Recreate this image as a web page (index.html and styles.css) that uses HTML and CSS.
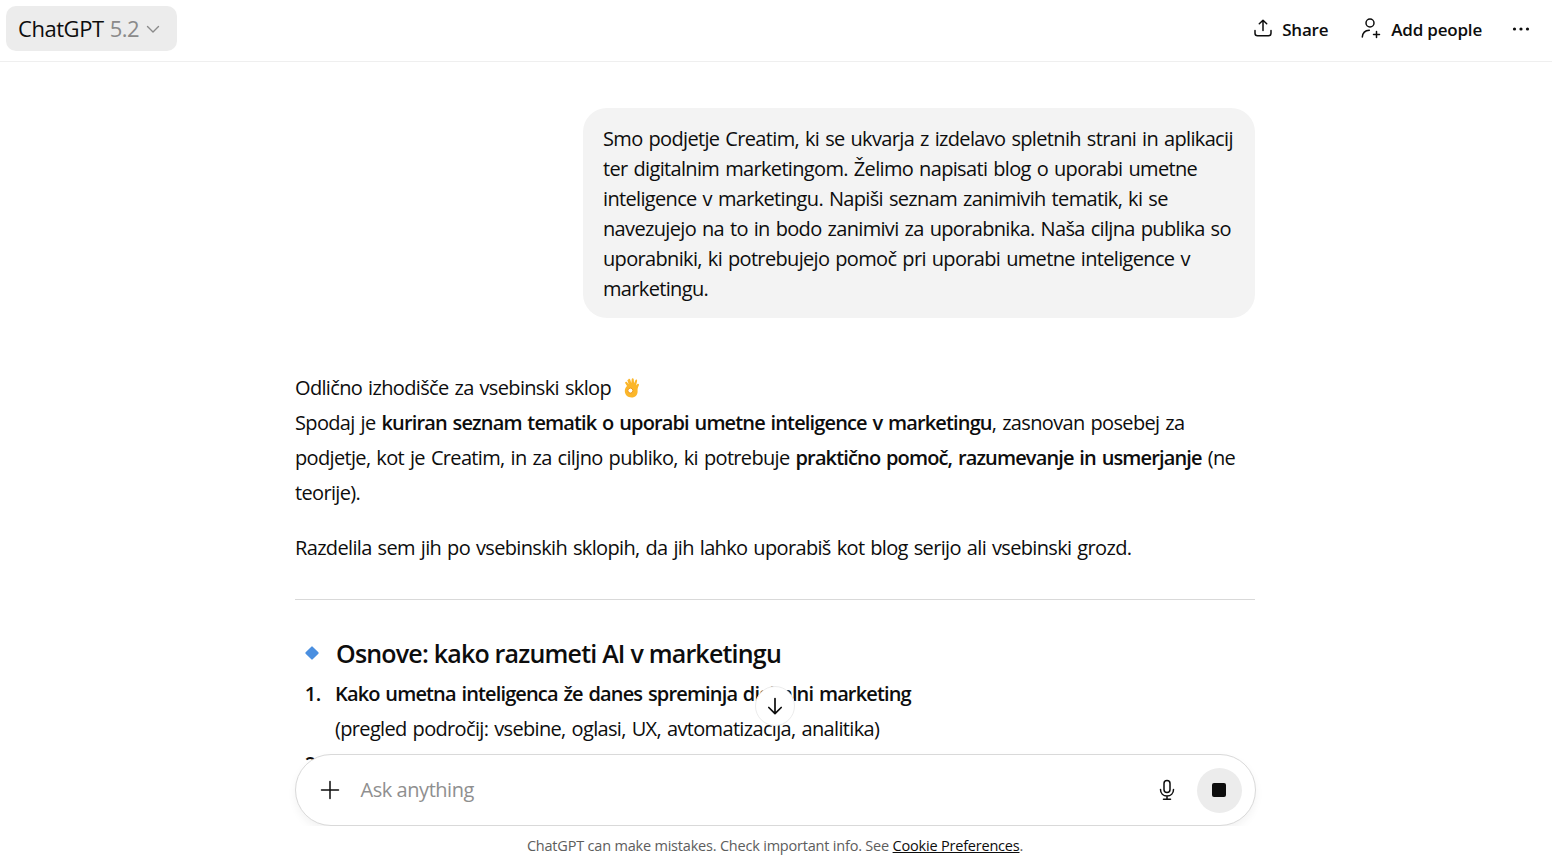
FILE: index.html
```html
<!DOCTYPE html>
<html lang="sl">
<head>
    <meta charset="UTF-8">
    <meta name="viewport" content="width=device-width, initial-scale=1.0">
    <title>ChatGPT</title>
    <link rel="stylesheet" href="styles.css">
</head>
<body>

<div class="page">
    <header class="topbar">
        <button class="model-btn">ChatGPT <span class="model-ver">5.2</span>
            <svg class="chev" width="16" height="16" viewBox="0 0 16 16"><path d="M2.500 5.500 8 11l5.500-5.500" fill="none" stroke="#8a8a8a" stroke-width="1.400" stroke-linecap="round" stroke-linejoin="round"/></svg>
        </button>
        <div class="top-actions">
            <button class="top-btn">
                <svg width="20" height="20" viewBox="0 0 20 20" fill="none" stroke="#0d0d0d" stroke-width="1.500" stroke-linecap="round" stroke-linejoin="round"><path d="M10 12.500V2.300M6.300 5.800 10 2.200l3.700 3.600M2 12.500v2.800c0 1.500 1 2.500 2.500 2.500h11c1.500 0 2.500-1 2.500-2.500v-2.800"/></svg>
                Share
            </button>
            <button class="top-btn">
                <svg width="22" height="22" viewBox="0 0 22 22" fill="none" stroke="#0d0d0d" stroke-width="1.500" stroke-linecap="round" stroke-linejoin="round"><circle cx="10" cy="6" r="4"/><path d="M2.300 20c.3-4 3-6.600 7-6.800M16.500 14.500v6M13.500 17.500h6"/></svg>
                Add people
            </button>
            <button class="more-btn" aria-label="More">
                <svg width="20" height="20" viewBox="0 0 20 20" fill="#0d0d0d"><circle cx="3.500" cy="10" r="1.600"/><circle cx="10" cy="10" r="1.600"/><circle cx="16.500" cy="10" r="1.600"/></svg>
            </button>
        </div>
    </header>

    <main class="thread">
        <div class="column">
            <div class="user-row">
                <div class="bubble">Smo podjetje Creatim, ki se ukvarja z izdelavo spletnih strani in aplikacij ter digitalnim marketingom. Želimo napisati blog o uporabi umetne inteligence v marketingu. Napiši seznam zanimivih tematik, ki se navezujejo na to in bodo zanimivi za uporabnika. Naša ciljna publika so uporabniki, ki potrebujejo pomoč pri uporabi umetne inteligence v marketingu.</div>
            </div>

            <div class="answer">
                <p class="intro">Odlično izhodišče za vsebinski sklop
                    <svg class="emoji" width="18" height="21" viewBox="0 0 18 21"><path d="M5.200 2.200c-.3-1.300 1.500-2 2-.7l1.100 3.600.4-3.900c.1-1.200 1.800-1.200 2 0l.4 4 1.300-3c.5-1.100 2-.5 1.700.7l-1 4.500 1.300-1.300c.9-.8 2 .2 1.500 1.200-1 2-1.500 3.700-1.300 5.700.3 3.800-2.300 6.500-6 6.500-3.900 0-6.800-2.800-6.800-6.500 0-2 .8-3.800 2.200-5l-1.700-2.800c-.7-1.100.8-2.100 1.600-1.100l1.800 2.200-1.500-4.600Z" fill="#fbb62a"/><circle cx="7.400" cy="12.600" r="2.500" fill="#fff" stroke="#ef9a1a" stroke-width="1"/></svg>
                    <br>Spodaj je <strong>kuriran seznam tematik o uporabi umetne inteligence v marketingu</strong>, zasnovan posebej za podjetje, kot je Creatim, in za ciljno publiko, ki potrebuje <strong>praktično pomoč, razumevanje in usmerjanje</strong> (ne teorije).</p>
                <p class="lead">Razdelila sem jih po vsebinskih sklopih, da jih lahko uporabiš kot blog serijo ali vsebinski grozd.</p>
                <hr class="rule">
                <h3 class="section-title"><span class="diamond"></span>Osnove: kako razumeti AI v marketingu</h3>
                <ol class="topics">
                    <li><strong>Kako umetna inteligenca že danes spreminja digitalni marketing</strong><br>(pregled področij: vsebine, oglasi, UX, avtomatizacija, analitika)</li>
                    <li><strong>AI v marketingu: kaj je res in kaj je samo hype</strong><br>(najpogostejši miti in napačna pričakovanja)</li>
                </ol>
            </div>
        </div>
    </main>

    <button class="scroll-btn" aria-label="Scroll down">
        <svg width="20" height="20" viewBox="0 0 20 20" fill="none" stroke="#0d0d0d" stroke-width="1.700" stroke-linecap="round" stroke-linejoin="round"><path d="M10 2.500v15M3.800 11.500 10 17.700l6.200-6.200"/></svg>
    </button>

    <div class="bottom">
        <div class="composer">
            <svg class="plus" width="20" height="20" viewBox="0 0 20 20" fill="none" stroke="#0d0d0d" stroke-width="1.500" stroke-linecap="round"><path d="M10 1.500v17M1.500 10h17"/></svg>
            <span class="placeholder">Ask anything</span>
            <svg class="mic" width="20" height="22" viewBox="0 0 20 22" fill="none" stroke="#0d0d0d" stroke-width="1.500" stroke-linecap="round"><rect x="7" y="1.500" width="6" height="12" rx="3"/><path d="M3.500 10.500c0 4 2.800 6.500 6.500 6.500s6.500-2.500 6.500-6.500M10 17v3M6.500 20.300h7"/></svg>
            <button class="stop-btn" aria-label="Stop"><span class="stop-icon"></span></button>
        </div>
        <p class="disclaimer">ChatGPT can make mistakes. Check important info. See <a href="#">Cookie Preferences</a>.</p>
    </div>
</div>

</body>
</html>
```

FILE: styles.css
```css
* { box-sizing: border-box; }
html, body { margin: 0; height: 100%; overflow: hidden; }
body { font-family: "Open Sans", "Noto Sans", sans-serif; font-size: 20px; color: #0d0d0d; background: #fff; }
button { font: inherit; color: inherit; background: none; border: none; padding: 0; cursor: pointer; }

.page { position: relative; height: 860px; display: flex; flex-direction: column; }

.topbar { height: 62px; flex: none; display: flex; justify-content: space-between; align-items: center; padding: 0 21px 4px 6px; border-bottom: 1px solid #efefef; }
.model-btn { display: flex; align-items: center; height: 45px; padding: 0 16px 2px 12px; gap: 6px; background: #ececec; border-radius: 10px; font-size: 22px; letter-spacing: -0.45px; }
.model-ver { color: #8a8a8a; }
.chev { margin-top: 2px; }
.top-actions { display: flex; align-items: center; margin-top: 2px; }
.top-btn { display: flex; align-items: center; gap: 9px; font-size: 17px; font-weight: 600; letter-spacing: -0.2px; margin-right: 32px; }
.top-btn svg { margin-top: -3px; }
.top-btn + .top-btn { margin-right: 29px; }
.more-btn { display: flex; margin-top: -2px; }

.thread { flex: 1; overflow: hidden; padding-right: 2px; }
.column { width: 960px; margin: 0 auto; padding-top: 46px; word-spacing: 1.4px; letter-spacing: -0.66px; }

.user-row { display: flex; justify-content: flex-end; }
.bubble { width: 672px; padding: 16px 20px 14px; background: #f3f3f3; border-radius: 24px; line-height: 30px; }

.answer { margin-top: 52px; line-height: 35px; }
.answer p { margin: 0; }
.answer strong { font-weight: 600; letter-spacing: -0.86px; }
.answer .lead { margin-top: 20px; }
.emoji { vertical-align: -4px; margin-left: 6px; }
.rule { border: none; border-top: 1px solid #d9d9d9; margin: 34px 0 0; }
.section-title { display: flex; align-items: center; margin: 33px 0 0; font-size: 25px; font-weight: 600; line-height: 40px; word-spacing: 0; letter-spacing: -0.8px; }
.diamond { width: 10px; height: 10px; margin: 0 19px 0 12px; background: #4a8fe0; transform: rotate(45deg); border-radius: 1px; }
.topics { margin: 3px 0 0; padding-left: 40px; }
.topics li::marker { content: counter(list-item) ".\00a0\00a0\2009"; font-weight: 600; }

.scroll-btn { position: absolute; left: 755px; top: 686px; width: 40px; height: 40px; display: flex; align-items: center; justify-content: center; background: #fff; border: 1px solid #ececec; border-radius: 50%; }

.bottom { position: absolute; left: 0; right: 2px; top: 754px; height: 106px; display: flex; flex-direction: column; align-items: center; pointer-events: none; }
.composer { width: 961px; height: 72px; flex: none; display: flex; align-items: center; padding: 0 13px 0 24px; background: #fff; border: 1px solid #d9d9d9; border-radius: 36px; box-shadow: 0 4px 8px rgba(0, 0, 0, 0.05); }
.placeholder { flex: 1; margin-left: 21px; padding-bottom: 2px; color: #8f8f8f; letter-spacing: -0.45px; }
.mic { margin-right: 20px; }
.stop-btn { width: 45px; height: 45px; display: flex; align-items: center; justify-content: center; background: #ececec; border-radius: 50%; }
.stop-icon { width: 14px; height: 14px; background: #0d0d0d; border-radius: 2px; }
.disclaimer { margin: 0; padding-top: 10px; width: 100%; background: #fff; flex: 1; text-align: center; font-size: 14.500px; line-height: 20px; color: #5d5d5d; letter-spacing: -0.2px; }
.disclaimer a { color: #0d0d0d; }
```
